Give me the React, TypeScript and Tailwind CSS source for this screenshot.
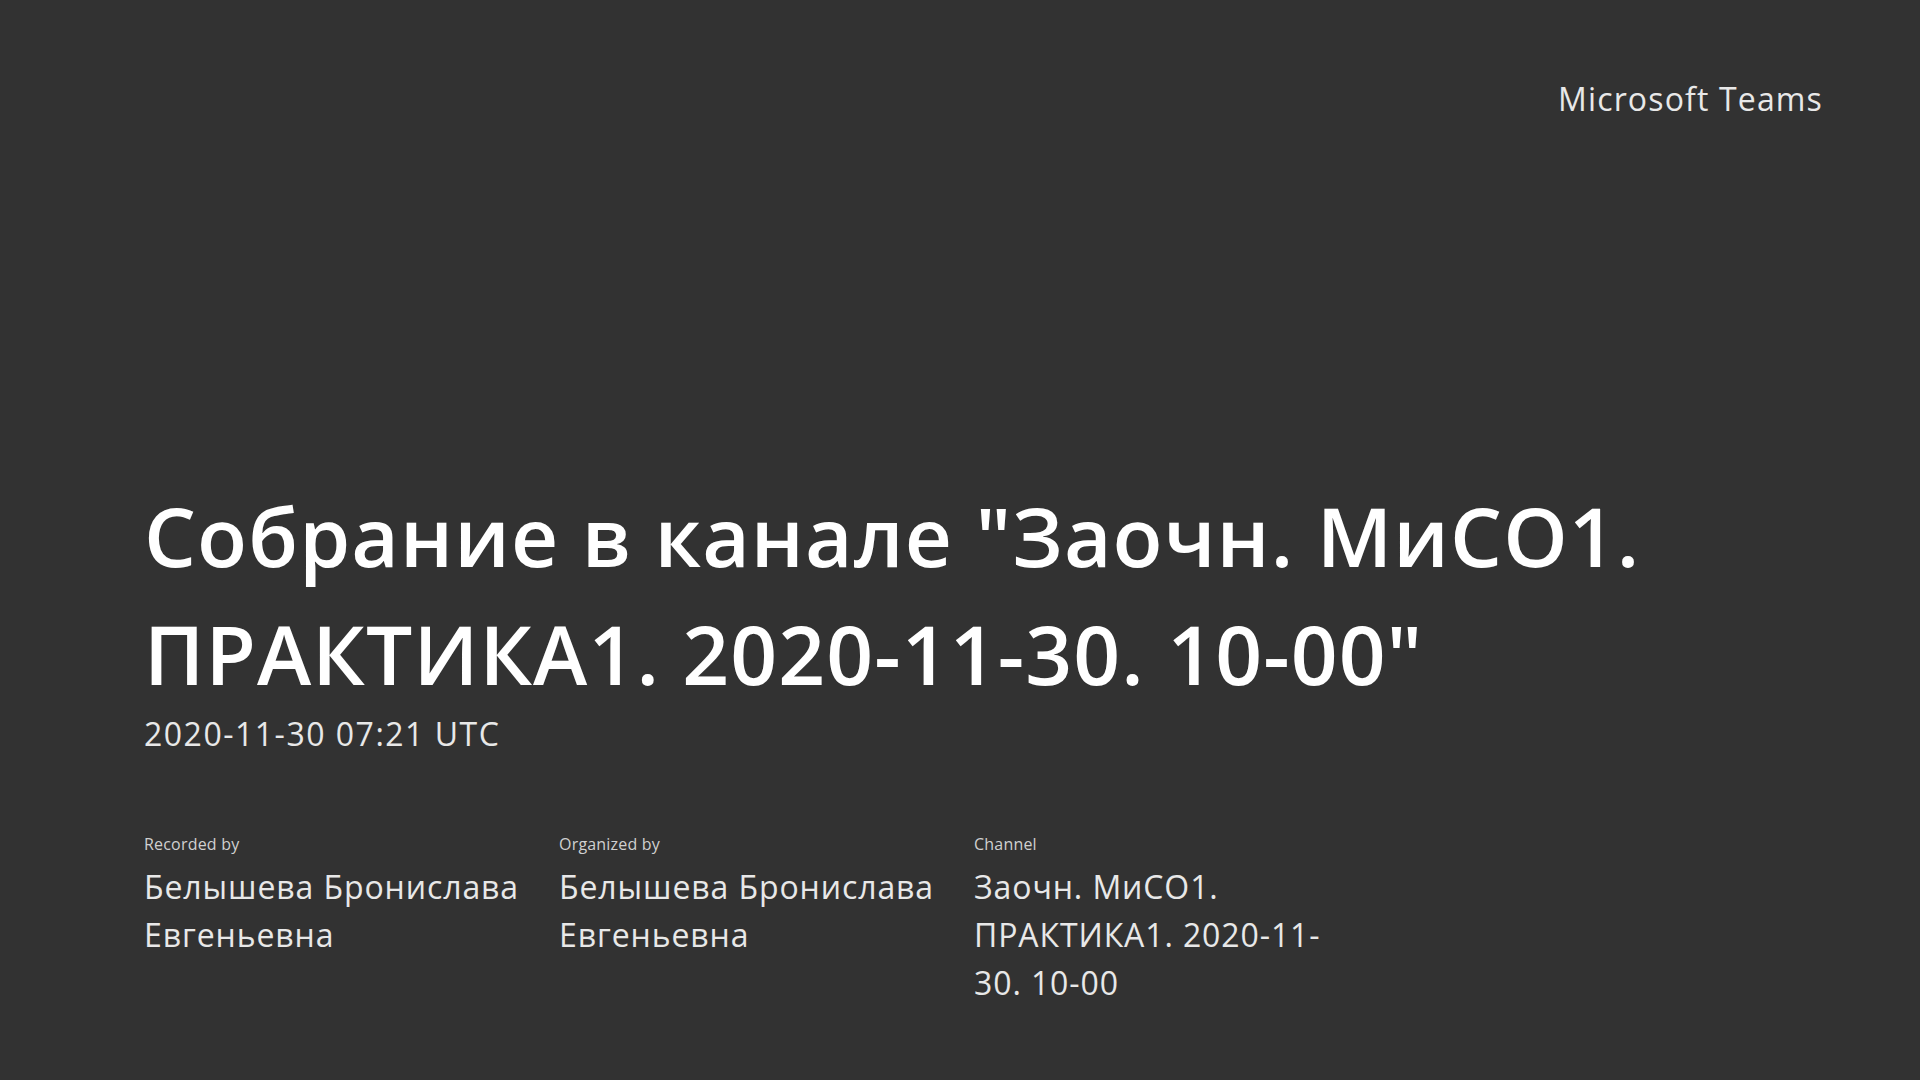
export default function App() {
  return (
    <div className="flex h-[1080px] w-[1920px] flex-col overflow-hidden bg-[#323232] pl-[144px] pr-[97px] pt-[79px] font-['Open_Sans','Noto_Sans',sans-serif] text-white">
      <div className="self-end text-[32px] leading-[40px] tracking-[1.15px] text-[#e8e8e8]">Microsoft Teams</div>

      <h1 className="mt-[357px] w-[1560px] text-[82px] font-semibold leading-[118px] tracking-[1.1px]">
        Собрание в канале "Заочн. МиСО1. ПРАКТИКА1. 2020-11-30. 10-00"
      </h1>
      <div className="text-[32px] leading-[44px] tracking-[1.5px] text-[#e8e8e8]">2020-11-30 07:21 UTC</div>

      <div className="mt-[78px] flex">
        <Meta label="Recorded by" value="Белышева Бронислава Евгеньевна" />
        <Meta label="Organized by" value="Белышева Бронислава Евгеньевна" />
        <Meta label="Channel" value="Заочн. МиСО1. ПРАКТИКА1. 2020-11-30. 10-00" />
      </div>
    </div>
  );
}

function Meta({ label, value }: { label: string; value: string }) {
  return (
    <div className="w-[415px] pr-[30px]">
      <div className="text-[16px] leading-[20px] tracking-[0.2px] text-[#d0d0d0]">{label}</div>
      <div className="mt-[9px] text-[32px] leading-[48px] tracking-[0.9px] text-[#e8e8e8]">{value}</div>
    </div>
  );
}
